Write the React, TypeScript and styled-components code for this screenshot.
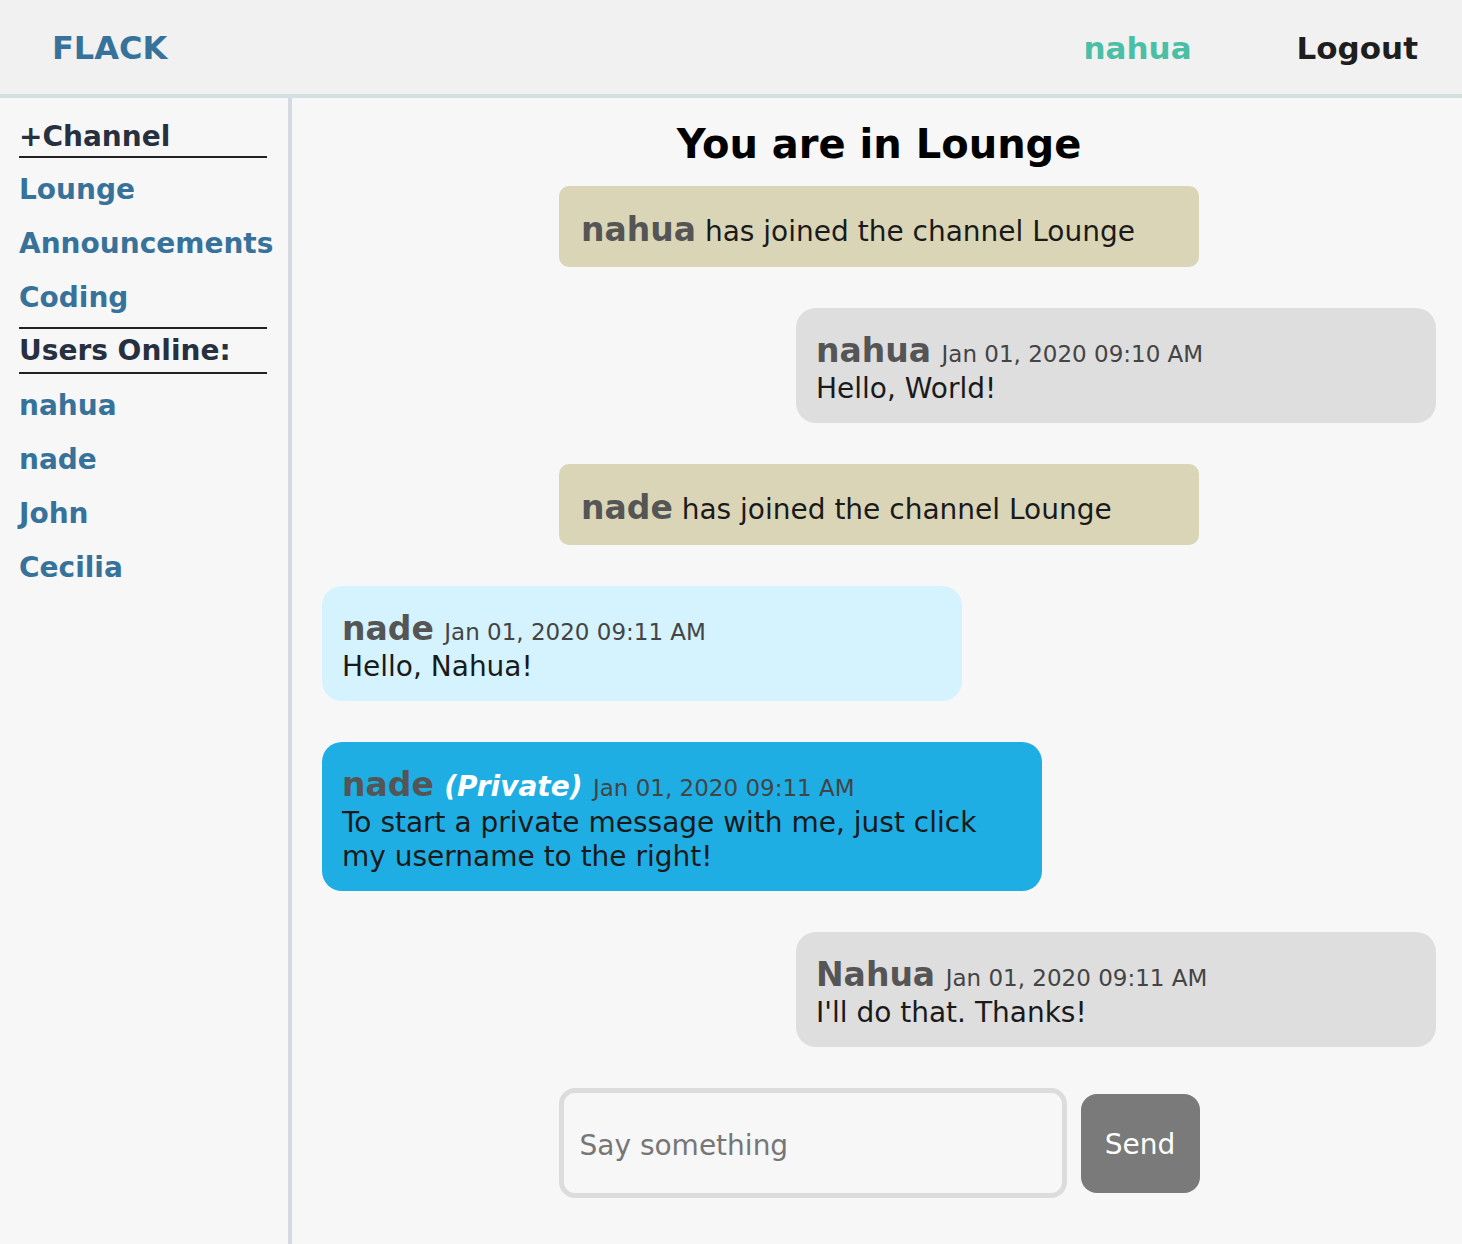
import React from 'react'
import styled, { createGlobalStyle } from 'styled-components'

const GlobalStyle = createGlobalStyle`
  * { box-sizing: border-box; }
  body {
    margin: 0;
    font-family: "DejaVu Sans", Verdana, sans-serif;
    background-color: #f7f7f7;
  }
`

const Page = styled.div`
  display: flex;
  flex-direction: column;
  min-height: 1244px;
`

const Header = styled.header`
  height: 98px;
  background-color: #f1f1f1;
  border-bottom: 4px solid #d3dfe0;
  display: flex;
  align-items: center;
  padding: 2px 44px 0 52px;
`

const Brand = styled.div`
  font-size: 32px;
  font-weight: bold;
  color: #37729a;
  flex: 1;
`

const NavLink = styled.a<{ $accent?: boolean }>`
  font-size: 31px;
  font-weight: bold;
  color: ${(p) => (p.$accent ? '#4bbfa5' : '#1e1e1e')};
  text-decoration: none;
  margin-left: 105px;
`

const Body = styled.div`
  flex: 1;
  display: flex;
`

const Sidebar = styled.aside`
  width: 292px;
  flex-shrink: 0;
  border-right: 4px solid #d5d9e1;
  padding: 20px 21px 0 19px;
`

const SideHeading = styled.div<{ $top?: boolean }>`
  font-size: 28px;
  font-weight: bold;
  color: #263040;
  line-height: ${(p) => (p.$top ? '43px' : '38px')};
  border-bottom: 2px solid #222;
  border-top: ${(p) => (p.$top ? '2px solid #222' : 'none')};
`

const SideList = styled.ul`
  list-style: none;
  margin: 0;
  padding: 5px 0 2px;
`

const SideItem = styled.li`
  font-size: 28px;
  font-weight: bold;
  line-height: 54px;
  color: #37729a;
  white-space: nowrap;
`

const Main = styled.main`
  flex: 1;
  display: flex;
  flex-direction: column;
  padding: 22px 26px 0 30px;
`

const Title = styled.h1`
  margin: 0 0 18px;
  font-size: 40px;
  line-height: 48px;
  text-align: center;
  color: #000;
`

const Feed = styled.div`
  display: flex;
  flex-direction: column;
  gap: 41px;
`

const Notice = styled.div`
  align-self: center;
  width: 640px;
  height: 81px;
  background-color: #dad5b7;
  border-radius: 10px;
  padding: 25px 22px 0;
  font-size: 28px;
  line-height: 41px;
  color: #1a1a1a;
`

type Tone = 'mine' | 'theirs' | 'private'

const bubbleBg: Record<Tone, string> = {
  mine: '#dedede',
  theirs: '#d4f3fe',
  private: '#1eaee4',
}

const Bubble = styled.div<{ $tone: Tone }>`
  align-self: ${(p) => (p.$tone === 'mine' ? 'flex-end' : 'flex-start')};
  width: ${(p) => (p.$tone === 'private' ? '720px' : '640px')};
  background-color: ${(p) => bubbleBg[p.$tone]};
  border-radius: 20px;
  padding: 24px 20px 17px;
  color: #1a1a1a;
`

const Meta = styled.div`
  height: 40px;
  line-height: 38px;
  font-size: 33px;
  white-space: nowrap;
`

const Name = styled.span`
  font-size: 33px;
  line-height: 1;
  font-weight: bold;
  color: #555;
`

const Stamp = styled.span`
  font-size: 23px;
  line-height: 1;
  color: #444;
`

const PrivateTag = styled.span`
  font-size: 28px;
  line-height: 1;
  font-weight: bold;
  font-style: italic;
  color: #fff;
`

const Text = styled.div`
  font-size: 28px;
  line-height: 34px;
`

const Composer = styled.form`
  display: flex;
  justify-content: center;
  align-items: center;
  gap: 14px;
  margin-top: 41px;
`

const Input = styled.input`
  width: 508px;
  height: 110px;
  border: 5px solid #dcdcdc;
  border-radius: 16px;
  background-color: #f7f7f7;
  padding: 4px 16px 0;
  font-family: inherit;
  font-size: 28px;
  color: #1a1a1a;
  outline: none;

  &::placeholder {
    color: #767676;
  }
`

const SendButton = styled.button`
  width: 119px;
  height: 99px;
  border: none;
  border-radius: 16px;
  background-color: #7a7a7a;
  color: #fff;
  font-family: inherit;
  font-size: 28px;
  padding-top: 4px;
`

const channels = ['Lounge', 'Announcements', 'Coding']
const users = ['nahua', 'nade', 'John', 'Cecilia']

export default function App() {
  return (
    <>
      <GlobalStyle />
      <Page>
        <Header>
          <Brand>FLACK</Brand>
          <NavLink $accent>nahua</NavLink>
          <NavLink>Logout</NavLink>
        </Header>
        <Body>
          <Sidebar>
            <SideHeading>+Channel</SideHeading>
            <SideList>
              {channels.map((c) => (
                <SideItem key={c}>{c}</SideItem>
              ))}
            </SideList>
            <SideHeading $top>Users Online:</SideHeading>
            <SideList>
              {users.map((u) => (
                <SideItem key={u}>{u}</SideItem>
              ))}
            </SideList>
          </Sidebar>
          <Main>
            <Title>You are in Lounge</Title>
            <Feed>
              <Notice>
                <Name>nahua</Name> has joined the channel Lounge
              </Notice>
              <Bubble $tone="mine">
                <Meta>
                  <Name>nahua</Name> <Stamp>Jan 01, 2020 09:10 AM</Stamp>
                </Meta>
                <Text>Hello, World!</Text>
              </Bubble>
              <Notice>
                <Name>nade</Name> has joined the channel Lounge
              </Notice>
              <Bubble $tone="theirs">
                <Meta>
                  <Name>nade</Name> <Stamp>Jan 01, 2020 09:11 AM</Stamp>
                </Meta>
                <Text>Hello, Nahua!</Text>
              </Bubble>
              <Bubble $tone="private">
                <Meta>
                  <Name>nade</Name> <PrivateTag>(Private)</PrivateTag>{' '}
                  <Stamp>Jan 01, 2020 09:11 AM</Stamp>
                </Meta>
                <Text>To start a private message with me, just click my username to the right!</Text>
              </Bubble>
              <Bubble $tone="mine">
                <Meta>
                  <Name>Nahua</Name> <Stamp>Jan 01, 2020 09:11 AM</Stamp>
                </Meta>
                <Text>I'll do that. Thanks!</Text>
              </Bubble>
            </Feed>
            <Composer onSubmit={(e) => e.preventDefault()}>
              <Input placeholder="Say something" />
              <SendButton type="submit">Send</SendButton>
            </Composer>
          </Main>
        </Body>
      </Page>
    </>
  )
}
